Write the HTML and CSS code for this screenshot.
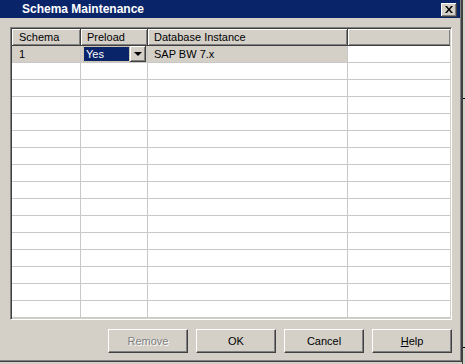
FILE: index.html
```html
<!DOCTYPE html>
<html lang="en">
<head>
  <meta charset="UTF-8">
  <title>Schema Maintenance</title>
  <link rel="stylesheet" href="styles.css">
</head>
<body>
  <div class="desktop">
    <div class="dialog">
      <div class="titlebar">
        <span class="title">Schema Maintenance</span>
        <span class="close">
          <svg width="8" height="7" viewBox="0 0 8 7"><path d="M0 0h2l2 2.5L6 0h2L5 3.5 8 7H6L4 4.5 2 7H0l3-3.5z" fill="#000"/></svg>
        </span>
      </div>

      <div class="content">
        <div class="grid">
          <div class="row head">
            <div class="cell c1">Schema</div>
            <div class="cell c2">Preload</div>
            <div class="cell c3">Database Instance</div>
            <div class="cell c4"></div>
          </div>
          <div class="row current">
            <div class="cell c1">1</div>
            <div class="cell c2 combo">
              <span class="combo-text">Yes</span>
              <span class="combo-btn"><span class="arrow"></span></span>
            </div>
            <div class="cell c3">SAP BW 7.x</div>
            <div class="cell c4"></div>
          </div>
          <div class="row"><div class="cell c1"></div><div class="cell c2"></div><div class="cell c3"></div><div class="cell c4"></div></div>
          <div class="row"><div class="cell c1"></div><div class="cell c2"></div><div class="cell c3"></div><div class="cell c4"></div></div>
          <div class="row"><div class="cell c1"></div><div class="cell c2"></div><div class="cell c3"></div><div class="cell c4"></div></div>
          <div class="row"><div class="cell c1"></div><div class="cell c2"></div><div class="cell c3"></div><div class="cell c4"></div></div>
          <div class="row"><div class="cell c1"></div><div class="cell c2"></div><div class="cell c3"></div><div class="cell c4"></div></div>
          <div class="row"><div class="cell c1"></div><div class="cell c2"></div><div class="cell c3"></div><div class="cell c4"></div></div>
          <div class="row"><div class="cell c1"></div><div class="cell c2"></div><div class="cell c3"></div><div class="cell c4"></div></div>
          <div class="row"><div class="cell c1"></div><div class="cell c2"></div><div class="cell c3"></div><div class="cell c4"></div></div>
          <div class="row"><div class="cell c1"></div><div class="cell c2"></div><div class="cell c3"></div><div class="cell c4"></div></div>
          <div class="row"><div class="cell c1"></div><div class="cell c2"></div><div class="cell c3"></div><div class="cell c4"></div></div>
          <div class="row"><div class="cell c1"></div><div class="cell c2"></div><div class="cell c3"></div><div class="cell c4"></div></div>
          <div class="row"><div class="cell c1"></div><div class="cell c2"></div><div class="cell c3"></div><div class="cell c4"></div></div>
          <div class="row"><div class="cell c1"></div><div class="cell c2"></div><div class="cell c3"></div><div class="cell c4"></div></div>
          <div class="row"><div class="cell c1"></div><div class="cell c2"></div><div class="cell c3"></div><div class="cell c4"></div></div>
          <div class="row"><div class="cell c1"></div><div class="cell c2"></div><div class="cell c3"></div><div class="cell c4"></div></div>
        </div>

        <div class="buttons">
          <button class="btn" disabled>Remove</button>
          <button class="btn">OK</button>
          <button class="btn">Cancel</button>
          <button class="btn"><u>H</u>elp</button>
        </div>
      </div>
    </div>

    <!-- edge of the window behind the dialog -->
    <div class="backwin">
      <span class="back-line one"></span>
      <span class="back-line two"></span>
    </div>
  </div>
</body>
</html>
```

FILE: styles.css
```css
body {
  margin: 0;
  font-family: 'Liberation Sans', Arial, sans-serif;
  font-size: 11px;
  color: #000;
  background-color: #d4d0c8;
}

.desktop {
  display: flex;
  width: 465px;
  height: 364px;
  overflow: hidden;
  position: relative;
}

.dialog {
  width: 462px;
  height: 362px;
  box-sizing: border-box;
  background-color: #d4d0c8;
  border-right: 1px solid #404040;
  border-bottom: 1px solid #404040;
  box-shadow: inset -1px -1px 0 #808080;
  flex-shrink: 0;
}

.titlebar {
  height: 18px;
  margin-right: 1px;
  background-color: #0a246a;
  display: flex;
  align-items: center;
  justify-content: space-between;
  padding: 0 3px 0 22px;
}

.title {
  color: #fff;
  font-weight: bold;
  font-size: 12px;
}

.close {
  width: 16px;
  height: 14px;
  box-sizing: border-box;
  background-color: #d4d0c8;
  border-right: 1px solid #404040;
  border-bottom: 1px solid #404040;
  box-shadow: inset 1px 1px 0 #fff, inset -1px -1px 0 #808080;
  display: flex;
  align-items: center;
  justify-content: center;
  margin-top: 1px;
}

.content {
  padding: 9px 0 0 10px;
}

/* sunken grid box */
.grid {
  width: 438px;
  border: 1px solid;
  border-color: #808080 #fff #fff #808080;
  box-shadow: inset 1px 1px 0 #404040, inset -1px -1px 0 #d4d0c8;
  padding: 1px;
  background-color: #fff;
}

.row {
  display: flex;
  height: 17px;
}

.cell {
  box-sizing: border-box;
  height: 17px;
  border-right: 1px solid #c8c8c8;
  border-bottom: 1px solid #c8c8c8;
  padding-left: 6px;
  line-height: 16px;
  white-space: nowrap;
}

.c1 { width: 69px; padding-left: 7px; }
.c2 { width: 67px; }
.c3 { width: 200px; }
.c4 { width: 102px; border-right: none; }

.head .cell {
  background-color: #d4d0c8;
  border-right: 1px solid #404040;
  border-bottom: 1px solid #404040;
  box-shadow: inset 1px 1px 0 #fff, inset -1px -1px 0 #808080;
}

.head .c4 {
  border-right: none;
}

.current .c1,
.current .c2,
.current .c3 {
  background-color: #d4d0c8;
}

.combo {
  display: flex;
  padding: 0;
}

.combo-text {
  margin: 1px 1px 1px 3px;
  width: 45px;
  height: 14px;
  line-height: 14px;
  box-sizing: border-box;
  padding-left: 2px;
  background-color: #0a246a;
  color: #fff;
  outline: 1px dotted #c8c0a0;
}

.combo-btn {
  width: 16px;
  height: 16px;
  box-sizing: border-box;
  border-right: 1px solid #404040;
  border-bottom: 1px solid #404040;
  box-shadow: inset 1px 1px 0 #fff, inset -1px -1px 0 #808080;
  display: flex;
  align-items: center;
  justify-content: center;
}

.arrow {
  width: 0;
  height: 0;
  border-left: 4px solid transparent;
  border-right: 4px solid transparent;
  border-top: 4px solid #000;
}

.buttons {
  display: flex;
  gap: 8px;
  margin-top: 9px;
  padding-left: 98px;
}

.btn {
  width: 80px;
  height: 24px;
  box-sizing: border-box;
  font-family: 'Liberation Sans', Arial, sans-serif;
  font-size: 11px;
  color: #000;
  background-color: #d4d0c8;
  border: 1px solid;
  border-color: #fff #404040 #404040 #fff;
  box-shadow: inset -1px -1px 0 #808080;
  padding: 0;
}

.btn:disabled {
  color: #808080;
  text-shadow: 1px 1px 0 #fff;
}

.backwin {
  flex: 1;
  position: relative;
  border-left: 1px solid #404040;
}

.back-line {
  position: absolute;
  left: 0;
  right: 0;
  height: 1px;
  background-color: #000;
}

.back-line.one { top: 98px; }
.back-line.two { top: 347px; }
```
